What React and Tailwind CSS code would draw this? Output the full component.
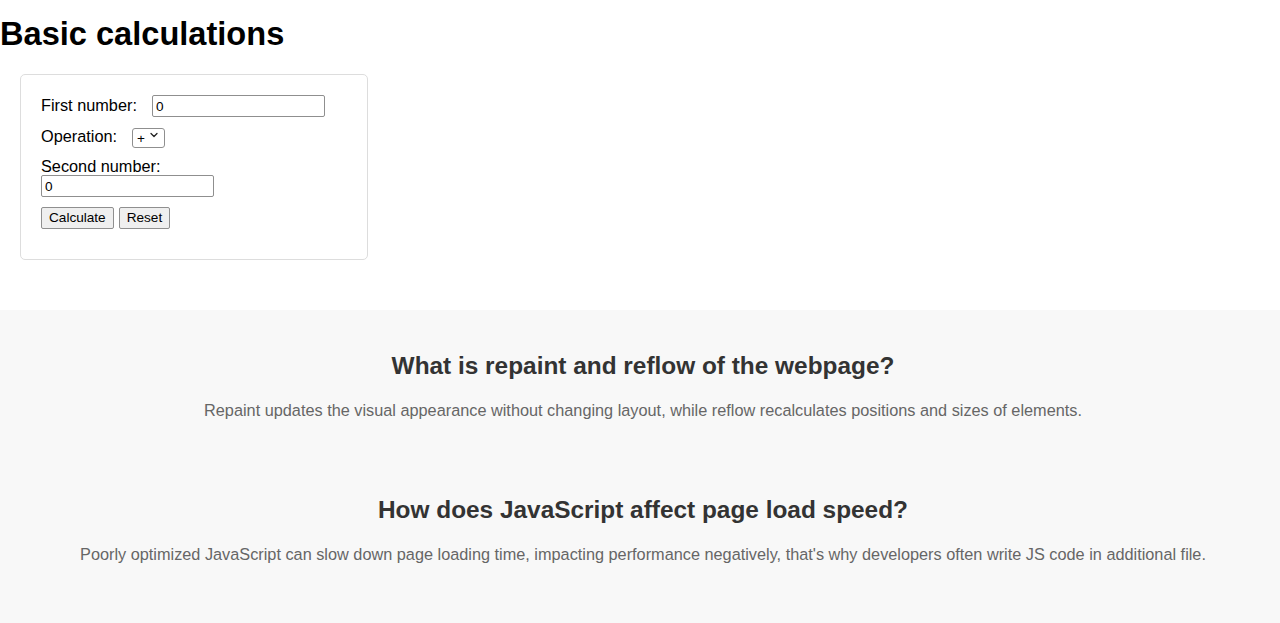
import { ChevronDown } from 'lucide-react'

export default function App() {
  return (
    <div className="min-h-[623px] bg-white font-['Liberation_Sans',Arial,sans-serif] text-black flex flex-col">
      <h1 className="mt-[15px] text-[32.6px] font-bold leading-[37px]">Basic calculations</h1>

      <div className="ml-[20px] mt-[22px] w-[348px] rounded-[5px] border border-[#dddddd] p-[20px] text-[16.3px]">
        <div className="mb-[10px] flex items-center h-[22px]">
          <label className="mr-[15px] -mt-[1px]">First number:</label>
          <input
            type="text"
            defaultValue="0"
            className="h-[22px] w-[173px] rounded-[2px] border border-[#8f8f8f] px-[3px] text-[13.6px] outline-none"
          />
        </div>

        <div className="mb-[10px] flex items-center h-[20px]">
          <label className="mr-[15px] -mt-[1px]">Operation:</label>
          <div className="relative">
            <select
              defaultValue="+"
              className="h-[20px] w-[33px] appearance-none rounded-[3px] border border-[#8f8f8f] bg-white pl-[4px] text-[13.6px] outline-none"
            >
              <option>+</option>
              <option>-</option>
              <option>*</option>
              <option>/</option>
            </select>
            <ChevronDown className="pointer-events-none absolute right-[5px] top-[4px] h-[12px] w-[12px] text-[#222]" strokeWidth={2.6} />
          </div>
        </div>

        <div className="mb-[10px]">
          <label className="block leading-[18px]">Second number:</label>
          <input
            type="text"
            defaultValue="0"
            className="block h-[22px] w-[173px] rounded-[2px] border border-[#8f8f8f] px-[3px] text-[13.6px] outline-none"
          />
        </div>

        <div className="mb-[10px] flex gap-[5px]">
          <button className="h-[22px] rounded-[2px] border border-[#8f8f8f] bg-[#efefef] px-[7px] text-[13.6px]">Calculate</button>
          <button className="h-[22px] rounded-[2px] border border-[#8f8f8f] bg-[#efefef] px-[7px] text-[13.6px]">Reset</button>
        </div>
      </div>

      <div className="mt-[50px] flex-1 bg-[#f8f8f8] pl-[6px] pt-[42px] pb-[40px] text-center">
        <div className="mb-[77px]">
          <h2 className="mb-[21px] text-[24.4px] font-bold leading-[28px] text-[#333333]">What is repaint and reflow of the webpage?</h2>
          <p className="text-[16.3px] leading-[18px] text-[#666666]">
            Repaint updates the visual appearance without changing layout, while reflow recalculates positions and sizes of elements.
          </p>
        </div>
        <div>
          <h2 className="mb-[21px] text-[24.4px] font-bold leading-[28px] text-[#333333]">How does JavaScript affect page load speed?</h2>
          <p className="text-[16.3px] leading-[18px] text-[#666666]">
            Poorly optimized JavaScript can slow down page loading time, impacting performance negatively, that's why developers often write JS code in additional file.
          </p>
        </div>
      </div>
    </div>
  )
}
